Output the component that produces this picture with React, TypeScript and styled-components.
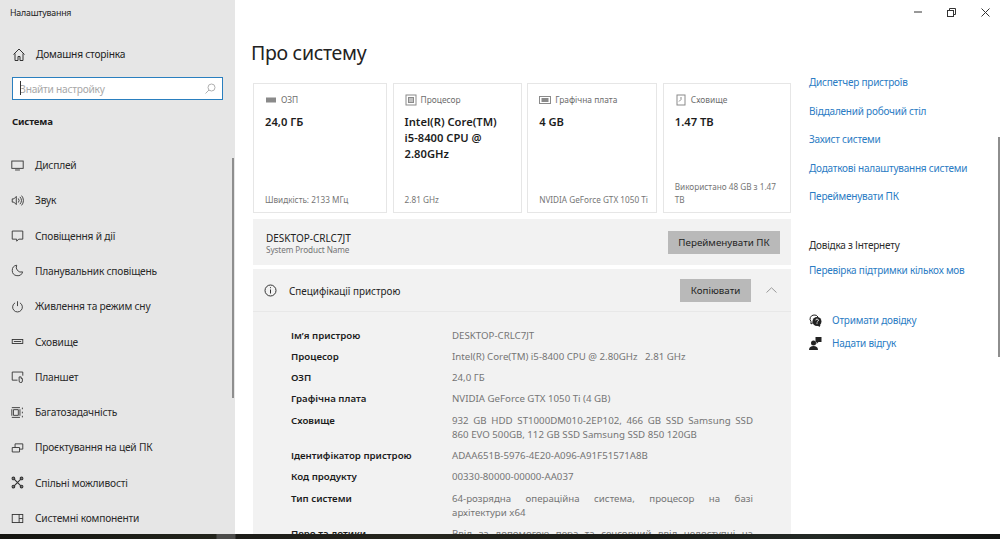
import React from "react";
import styled, { createGlobalStyle } from "styled-components";

const Global = createGlobalStyle`
  html, body { margin: 0; padding: 0; background: #fff; overflow: hidden; }
  #root { height: 539px; }
  * { box-sizing: border-box; }
`;

const Page = styled.div`
  width: 1000px; height: 539px; display: flex; flex-direction: column; overflow: hidden;
  font-family: "Noto Sans", "Open Sans", sans-serif; color: #1a1a1a; position: relative;
`;
const Windows = styled.div`display: flex; height: 534px; overflow: hidden; flex: none;`;
const Taskbar = styled.div`
  height: 5px; flex: none;
  background: linear-gradient(90deg, #141410 0, #22241c 216px, #4c4c4a 217px, #4c4c4a 235px, #1c1c18 236px, #26261e 420px, #1a1c18 640px, #242a26 820px, #141614 1000px);
`;
const Sidebar = styled.aside`
  width: 235px; flex: none; background: #e6e6e6; position: relative; overflow: hidden;
  display: flex; flex-direction: column;
  > * { flex: none; }
`;
const AppTitle = styled.div`font-size: 8.8px; letter-spacing: -0.2px; line-height: 14px; padding: 6px 0 0 10px; color: #222;`;
const HomeRow = styled.div`
  display: flex; align-items: center; gap: 11px; padding: 0 0 0 13px; margin-top: 20px; height: 28px;
  font-size: 10.2px; letter-spacing: -0.2px; color: #222; svg { flex: none; }
`;
const Search = styled.div`
  margin: 9px 0 0 12px; width: 211px; height: 23px; background: #fff; border: 1.5px solid #2a7fbf;
  display: flex; align-items: center; justify-content: space-between; padding: 0 6px 0 7px;
  font-size: 10.2px; letter-spacing: -0.25px; color: #a8a8a8; position: relative;
`;
const Caret = styled.i`position: absolute; left: 7px; top: 3px; width: 1px; height: 14px; background: #333;`;
const GroupTitle = styled.div`font-size: 9.6px; letter-spacing: -0.15px; font-weight: 700; padding: 0 0 0 12px; margin-top: 15px; line-height: 14px; color: #1c1c1c;`;
const Menu = styled.nav`display: flex; flex-direction: column; margin-top: 18.4px;`;
const MenuRow = styled.div`
  height: 35.3px; flex: none; display: flex; align-items: center; gap: 11px; padding-left: 11px;
  font-size: 10.2px; letter-spacing: -0.2px; color: #2a2a2a; svg { flex: none; }
`;
const SideThumb = styled.div`position: absolute; left: 232px; top: 158px; width: 2px; height: 240px; background: #8e8e8e;`;

const Main = styled.main`flex: 1; min-width: 0; position: relative; display: flex; background: #fff;`;
const Content = styled.div`width: 574px; padding: 0 0 0 18px; flex: none;`;
const Title = styled.h1`font-size: 19.5px; font-weight: 400; margin: 0 0 0 -2px; padding-top: 39px; line-height: 28px; color: #222; height: 83px; letter-spacing: -0.3px;`;
const Cards = styled.div`display: grid; grid-template-columns: 134px 129px 130px 128px; column-gap: 5.6px; width: 538px;`;
const Card = styled.section`
  height: 130px; border: 1px solid #e6e6e6; padding: 9px 6px 6px 11px; display: flex; flex-direction: column;
`;
const CardHead = styled.div`display: flex; align-items: center; gap: 4px; font-size: 8.4px; color: #6e6e6e; line-height: 14px; height: 14px; svg { flex: none; }`;
const CardValue = styled.div`font-size: 11.2px; font-weight: 600; line-height: 16px; margin-top: 7px; padding-right: 8px; color: #1c1c1c;`;
const CardFoot = styled.div`margin-top: auto; font-size: 8.2px; line-height: 13px; color: #757575;`;
const NameBar = styled.div`
  margin-top: 6px; width: 538px; height: 46px; background: #f2f2f2; display: flex; align-items: center;
  justify-content: space-between; padding: 0 11px 0 13px;
`;
const NameText = styled.div`font-size: 10px; line-height: 12.5px; color: #222; padding-top: 4px; small { display: block; font-size: 8.2px; letter-spacing: -0.1px; color: #757575; }`;
const GrayButton = styled.div`
  height: 23px; background: #b9b9b9; font-size: 9.8px; color: #1f1f1f; display: flex; align-items: center; justify-content: center;
  width: ${(p: { $w: number }) => p.$w}px;
`;
const SpecPanel = styled.div`margin-top: 4px; width: 538px; background: #f2f2f2;`;
const SpecHeader = styled.div`
  height: 43px; border-bottom: 1px solid #e8e8e8; display: flex; align-items: center; padding: 0 11px 0 11px; font-size: 9.9px; color: #222;
`;
const SpecLabel = styled.span`margin-left: 12px; flex: 1; padding-top: 1px;`;
const Chevron = styled.span`width: 29px; display: flex; justify-content: flex-end; padding-right: 3px;`;
const SpecGrid = styled.dl`
  display: grid; grid-template-columns: 161px 301px; margin: 0; padding: 16.5px 0 0 38px; row-gap: 7.3px;
  font-size: 9.7px; line-height: 14px;
`;
const Key = styled.dt`font-weight: 600; color: #1c1c1c; margin: 0;`;
const Val = styled.dd`margin: 0; color: #757575; text-align: justify;`;

const Aside = styled.aside`flex: 1; position: relative; font-size: 10px; letter-spacing: -0.22px; line-height: 14px;`;
const WinControls = styled.div`position: absolute; top: 7px; right: 10px; display: flex; gap: 25px; align-items: center; height: 10px;`;
const Links = styled.div`padding-top: 75px; display: flex; flex-direction: column; gap: 14.5px;`;
const LinkText = styled.a`color: #2b7cc4; display: block;`;
const HelpTitle = styled.div`color: #2c2c2c; margin-top: 35px;`;
const HelpLink = styled(LinkText)`margin-top: 11px;`;
const Actions = styled.div`display: flex; flex-direction: column; gap: 9px; margin-top: 36px;`;
const ActionRow = styled.div`display: flex; align-items: center; gap: 10px; height: 14px; svg { flex: none; }`;
const RightThumb = styled.div`position: absolute; right: 0; top: 137px; width: 2px; height: 220px; background: #8e8e8e;`;

const S = { width: 13, height: 13, viewBox: "0 0 16 16", fill: "none", stroke: "#333", strokeWidth: 1.1 };
const items: [string, React.ReactNode][] = [
  ["Дисплей", <svg {...S}><rect x="1" y="2.5" width="14" height="9" /><path d="M5 13.5h6" /></svg>],
  ["Звук", <svg {...S}><path d="M1.5 6v4h2l3 3V3l-3 3zM9 5.5a4 4 0 0 1 0 5M11 3.5a7 7 0 0 1 0 9M13 2a9 9 0 0 1 0 12" /></svg>],
  ["Сповіщення й дії", <svg {...S}><path d="M1.5 2.5h13v10H9.5L7 15v-2.5H1.5z" /></svg>],
  ["Планувальник сповіщень", <svg {...S}><path d="M7 1.5a6.5 6.5 0 1 0 7.3 8.2A6 6 0 0 1 7 1.5z" /></svg>],
  ["Живлення та режим сну", <svg {...S}><path d="M8 1.5v6M5 3.5a6 6 0 1 0 6 0" /></svg>],
  ["Сховище", <svg {...S}><rect x="1.5" y="5.5" width="13" height="5" /><path d="M3.5 8h9" /></svg>],
  ["Планшет", <svg {...S}><path d="M8 12.5H1.5v-10h13V7" /><path d="M10 8.5h2.500v2h1.500v3a2 2 0 0 1-4 0z" /></svg>],
  ["Багатозадачність", <svg {...S}><path d="M1 2h10M1 14h10M3 4.500h6v7H3zM14 2v2M14 7v2M14 12v2M1 4v8M11 4v8" /></svg>],
  ["Проєктування на цей ПК", <svg {...S}><path d="M1.500 8h9v5.500h-9zM5 8V3.500h9.500V10h-4" /></svg>],
  ["Спільні можливості", <svg {...S} strokeWidth={1.4}><path d="M3 3l10 10M13 3L3 13" /><circle cx="3" cy="3" r="1.6" /><circle cx="13" cy="3" r="1.6" /><circle cx="3" cy="13" r="1.6" /><circle cx="13" cy="13" r="1.6" /></svg>],
  ["Системні компоненти", <svg {...S}><rect x="1.500" y="3" width="13" height="10" /><path d="M10 3v10M10 8h4.500" /></svg>],
];
const specs: [string, string][] = [
  ["Ім’я пристрою", "DESKTOP-CRLC7JT"],
  ["Процесор", "Intel(R) Core(TM) i5-8400 CPU @ 2.80GHz\u00a0\u00a0 2.81 GHz"],
  ["ОЗП", "24,0 ГБ"],
  ["Графічна плата", "NVIDIA GeForce GTX 1050 Ti (4 GB)"],
  ["Сховище", "932 GB HDD ST1000DM010-2EP102, 466 GB SSD Samsung SSD 860 EVO 500GB, 112 GB SSD Samsung SSD 850 120GB"],
  ["Ідентифікатор пристрою", "ADAA651B-5976-4E20-A096-A91F51571A8B"],
  ["Код продукту", "00330-80000-00000-AA037"],
  ["Тип системи", "64-розрядна операційна система, процесор на базі архітектури\u00a0x64"],
  ["Перо та дотики", "Ввід за допомогою пера та сенсорний ввід недоступні на цьому\u00a0екрані"],
];
const C = { width: 12, height: 12, viewBox: "0 0 12 12", fill: "none", stroke: "#8a8a8a", strokeWidth: 1 };

export default function App() {
  return (
    <Page>
      <Global />
      <Windows>
        <Sidebar>
          <AppTitle>Налаштування</AppTitle>
          <HomeRow>
            <svg width="12" height="13" viewBox="0 0 12 13" fill="none" stroke="#333"><path d="M.5 6.500L6 1l5.500 5.500M2 5.500v7h3v-4h2v4h3v-7" /></svg>
            Домашня сторінка
          </HomeRow>
          <Search>
            <Caret />
            Знайти настройку
            <svg width="11" height="11" viewBox="0 0 11 11" fill="none" stroke="#b0b0b0"><circle cx="6.500" cy="4.500" r="3.500" /><path d="M4 7L.5 10.500" /></svg>
          </Search>
          <GroupTitle>Система</GroupTitle>
          <Menu>
            {items.map(([t, i]) => <MenuRow key={t}>{i}{t}</MenuRow>)}
          </Menu>
          <SideThumb />
        </Sidebar>
        <Main>
          <Content>
            <Title>Про систему</Title>
            <Cards>
              <Card>
                <CardHead><svg {...C}><rect x="1.500" y="4" width="9" height="4" fill="#8a8a8a" /></svg>ОЗП</CardHead>
                <CardValue>24,0 ГБ</CardValue>
                <CardFoot>Швидкість: 2133 МГц</CardFoot>
              </Card>
              <Card>
                <CardHead><svg {...C}><rect x="1" y="1" width="10" height="10" /><rect x="3.500" y="3.500" width="5" height="5" fill="#c0c0c0" /></svg>Процесор</CardHead>
                <CardValue>Intel(R) Core(TM) i5-8400 CPU @ 2.80GHz</CardValue>
                <CardFoot>2.81 GHz</CardFoot>
              </Card>
              <Card>
                <CardHead><svg {...C}><rect x=".5" y="2.500" width="11" height="7" /><rect x="3" y="4.500" width="6" height="3" fill="#8a8a8a" /></svg>Графічна плата</CardHead>
                <CardValue>4 GB</CardValue>
                <CardFoot>NVIDIA GeForce GTX 1050 Ti</CardFoot>
              </Card>
              <Card>
                <CardHead><svg {...C}><rect x="2" y="1" width="8" height="10" /><path d="M4 7.500L6 5.500V3" /></svg>Сховище</CardHead>
                <CardValue>1.47 TB</CardValue>
                <CardFoot>Використано 48 GB з 1.47 TB</CardFoot>
              </Card>
            </Cards>
            <NameBar>
              <NameText>DESKTOP-CRLC7JT<small>System Product Name</small></NameText>
              <GrayButton $w={112}>Перейменувати ПК</GrayButton>
            </NameBar>
            <SpecPanel>
              <SpecHeader>
                <svg width="13" height="13" viewBox="0 0 13 13" fill="none" stroke="#333"><circle cx="6.500" cy="6.500" r="5.500" /><path d="M6.500 5.500v4M6.500 3.200v1" /></svg>
                <SpecLabel>Специфікації пристрою</SpecLabel>
                <GrayButton $w={71}>Копіювати</GrayButton>
                <Chevron><svg width="11" height="6" viewBox="0 0 11 6" fill="none" stroke="#9a9a9a"><path d="M.5 5.500L5.500.8l5 4.700" /></svg></Chevron>
              </SpecHeader>
              <SpecGrid>
                {specs.map(([k, v]) => <React.Fragment key={k}><Key>{k}</Key><Val>{v}</Val></React.Fragment>)}
              </SpecGrid>
            </SpecPanel>
          </Content>
          <Aside>
            <WinControls>
              <svg width="8" height="2" viewBox="0 0 8 2" stroke="#333"><path d="M0 1h8" /></svg>
              <svg width="9" height="9" viewBox="0 0 9 9" fill="none" stroke="#333"><rect x=".5" y="2.500" width="6" height="6" /><path d="M2.500 2.500V.5h6v6H6.500" /></svg>
              <svg width="9" height="9" viewBox="0 0 9 9" fill="none" stroke="#333"><path d="M.5.5l8 8M8.500.5l-8 8" /></svg>
            </WinControls>
            <Links>
              <LinkText>Диспетчер пристроїв</LinkText>
              <LinkText>Віддалений робочий стіл</LinkText>
              <LinkText>Захист системи</LinkText>
              <LinkText>Додаткові налаштування системи</LinkText>
              <LinkText>Перейменувати ПК</LinkText>
            </Links>
            <HelpTitle>Довідка з Інтернету</HelpTitle>
            <HelpLink>Перевірка підтримки кількох мов</HelpLink>
            <Actions>
              <ActionRow>
                <svg width="13" height="13" viewBox="0 0 13 13"><path d="M5 1a4 4 0 0 0-3 6.600V10l2.300-1.500" fill="none" stroke="#222" /><path d="M5 1a4 4 0 0 1 4 2" fill="none" stroke="#222" /><circle cx="8" cy="7.500" r="4.500" fill="#222" /><path d="M10.500 13l-2.500-2h3.500z" fill="#222" /><path d="M6.800 6.300a1.300 1.300 0 1 1 1.900 1.200c-.5.300-.7.500-.7 1M8 9.300v.8" fill="none" stroke="#fff" strokeWidth=".9" /></svg>
                <LinkText>Отримати довідку</LinkText>
              </ActionRow>
              <ActionRow>
                <svg width="13" height="13" viewBox="0 0 13 13" fill="#222"><circle cx="4.500" cy="6" r="2.500" /><path d="M0 13c0-3 2-4 4.500-4S9 10 9 13z" /><path d="M6.500 0h6v5h-3l-2 2V5h-1z" /></svg>
                <LinkText>Надати відгук</LinkText>
              </ActionRow>
            </Actions>
            <RightThumb />
          </Aside>
        </Main>
      </Windows>
      <Taskbar />
    </Page>
  );
}
